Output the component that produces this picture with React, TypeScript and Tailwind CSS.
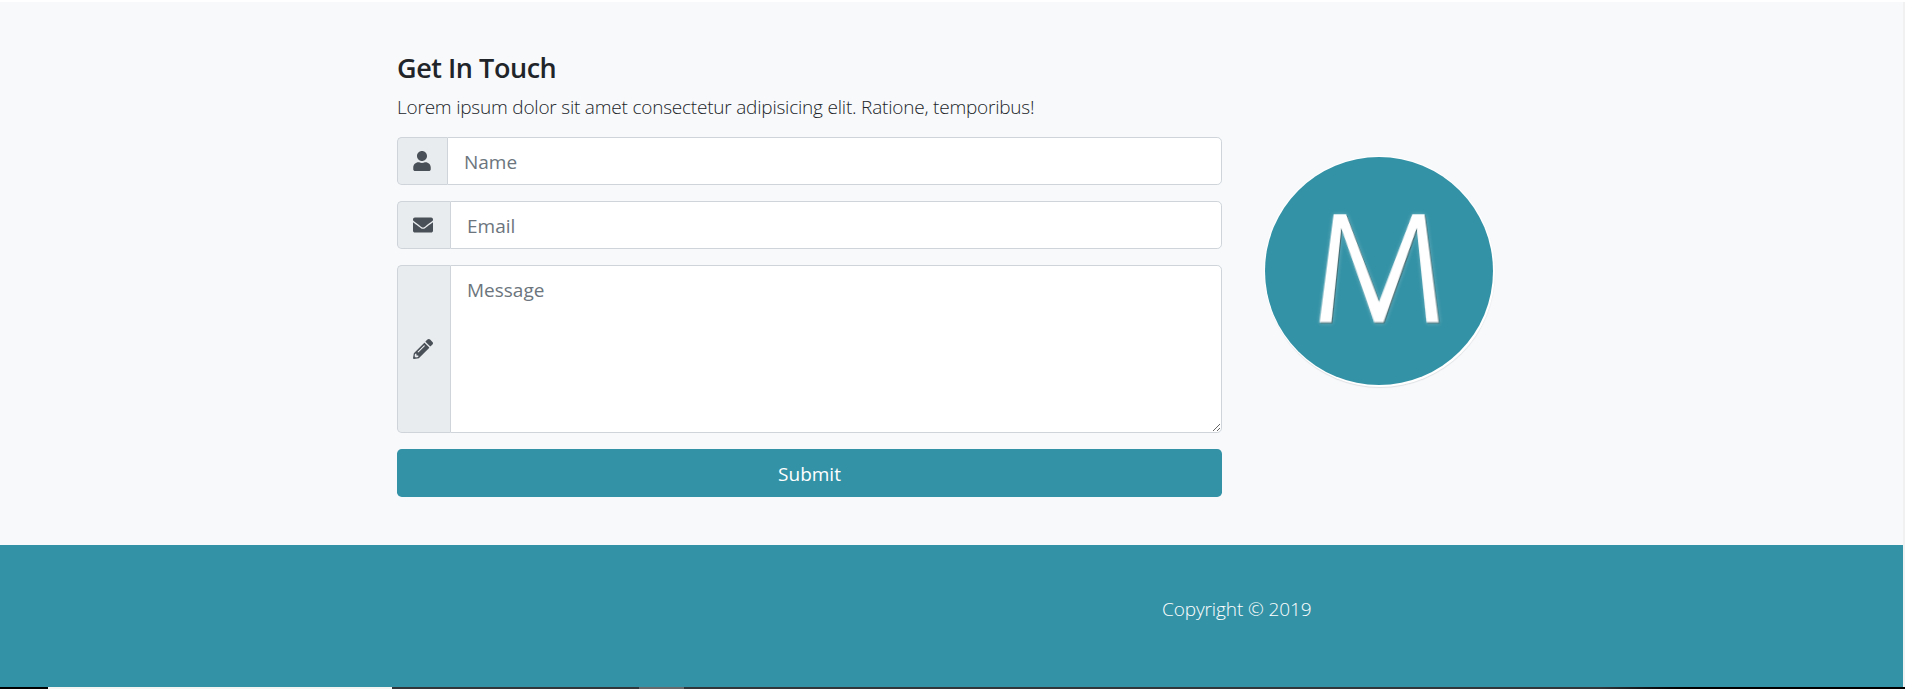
import { FaUser, FaEnvelope, FaPencilAlt } from "react-icons/fa";

const fieldText =
  "min-w-0 flex-1 rounded-r-[4.8px] border border-[#ced4da] bg-white px-4 text-[19px] leading-[30px] text-[#495057] outline-none placeholder:text-[#6c757d] placeholder:opacity-100";
const addon =
  "flex items-center rounded-l-[4.8px] border border-r-0 border-[#ced4da] bg-[#e9ecef] pb-px pl-[15px] text-[#495057]";

function Logo() {
  return (
    <div className="relative mt-[155px] ml-[43px] size-[228px] rounded-full bg-[#3392a6] shadow-[0_0_0_1px_#ffffff,1px_1px_0_1px_#ffffff,1px_2px_1px_1px_#dfe2e4]">
      <div className="absolute inset-0 flex items-center justify-center [filter:drop-shadow(1px_1px_0_#456b70)_drop-shadow(0_0_2px_#ffffff44)]">
        <span className="block origin-bottom font-['Open_Sans'] text-[151px] leading-none font-light text-white [-webkit-text-stroke:3px_white] [transform:translateY(-4px)_scale(1.21,1.82)_perspective(220px)_rotateX(40deg)]">
          M
        </span>
      </div>
    </div>
  );
}

export default function App() {
  return (
    <div className="flex h-[689px] w-full flex-col overflow-hidden bg-white pt-[2px] font-['Open_Sans','Noto_Sans',sans-serif]">
      <div className="flex h-[685px] bg-[#f1f1f1] pr-[2px]">
        <div className="flex flex-1 flex-col">
          <section className="flex h-[543px] bg-[#f8f9fb] pl-[397px]">
            <div className="w-[825px] pt-[49px]">
              <h3 className="h-[34px] text-[27px] leading-[34px] font-semibold tracking-[-0.45px] whitespace-nowrap text-[#212529]">
                Get In Touch
              </h3>
              <p className="mt-[7px] mb-[15px] h-[30px] text-[19px] leading-[30px] font-light tracking-[-0.21px] whitespace-nowrap text-[#212529]">
                Lorem ipsum dolor sit amet consectetur adipisicing elit. Ratione, temporibus!
              </p>
              <form className="flex flex-col gap-4">
                <div className="flex h-12">
                  <span className={`${addon} w-[50px]`}>
                    <FaUser className="h-[20px] w-[18px]" />
                  </span>
                  <input type="text" placeholder="Name" className={`${fieldText} pt-[8px] pb-[6px]`} />
                </div>
                <div className="flex h-12">
                  <span className={`${addon} w-[53px]`}>
                    <FaEnvelope size={20} />
                  </span>
                  <input type="text" placeholder="Email" className={`${fieldText} pt-[8px] pb-[6px]`} />
                </div>
                <div className="flex h-[168px]">
                  <span className={`${addon} w-[53px]`}>
                    <FaPencilAlt size={20} />
                  </span>
                  <textarea placeholder="Message" className={`${fieldText} pt-[9px] pb-[6px]`} />
                </div>
                <button
                  type="button"
                  className="h-12 rounded-[4.8px] bg-[#3392a6] pt-[2px] text-[19px] leading-[30px] text-white"
                >
                  Submit
                </button>
              </form>
            </div>
            <Logo />
          </section>
          <footer className="h-[142px] bg-[#3392a6] pt-[49px] pl-[1162px]">
            <p className="text-[19px] leading-[30px] font-light tracking-[-0.1px] whitespace-nowrap text-white">
              Copyright © 2019
            </p>
          </footer>
        </div>
      </div>
      <div className="flex h-[2px] bg-black">
        <div className="ml-[48px] w-[344px] bg-[#f4f4f2]" />
        <div className="w-[247px] bg-[#30363a]" />
        <div className="w-[45px] bg-[#666a6d]" />
        <div className="w-[916px] bg-[#30363a]" />
        <div className="w-[110px] bg-linear-to-r from-[#30363a] to-black" />
      </div>
    </div>
  );
}
